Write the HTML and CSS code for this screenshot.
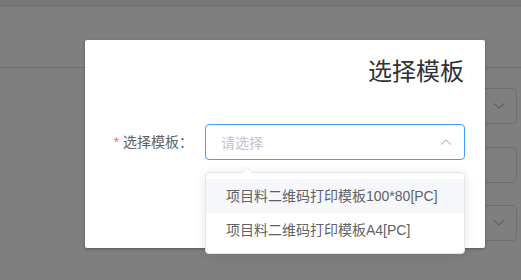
FILE: index.html
```html
<!DOCTYPE html>
<html lang="zh-CN">
<head>
    <meta charset="UTF-8">
    <title>选择模板</title>
    <link rel="stylesheet" href="styles.css">
</head>
<body>
    <div class="page">
        <div class="topbar"></div>
        <div class="toolbar"></div>
        <div class="fields">
            <div class="field field-select">
                <svg class="chev" width="12" height="8" viewBox="0 0 12 8"><path d="M1 1.5 L6 6 L11 1.5" fill="none" stroke="#c0c4cc" stroke-width="1.2"/></svg>
            </div>
            <div class="field field-2"></div>
            <div class="field field-select field-3">
                <svg class="chev" width="12" height="8" viewBox="0 0 12 8"><path d="M1 1.5 L6 6 L11 1.5" fill="none" stroke="#c0c4cc" stroke-width="1.2"/></svg>
            </div>
        </div>
    </div>

    <div class="mask">
        <div class="dialog">
            <div class="dialog-title">选择模板</div>
            <div class="form-row">
                <label class="form-label"><span class="req">*</span> 选择模板：</label>
                <div class="select">
                    <span class="placeholder">请选择</span>
                    <svg class="select-arrow" width="12" height="8" viewBox="0 0 12 8"><path d="M1 6.5 L6 2 L11 6.5" fill="none" stroke="#c0c4cc" stroke-width="1.2"/></svg>
                    <div class="dropdown">
                        <div class="dropdown-arrow"></div>
                        <ul class="options">
                            <li class="option hover">项目料二维码打印模板100*80[PC]</li>
                            <li class="option">项目料二维码打印模板A4[PC]</li>
                        </ul>
                    </div>
                </div>
            </div>
        </div>
    </div>
</body>
</html>
```

FILE: styles.css
```css
html, body {
    margin: 0;
    padding: 0;
}
body {
    font-family: "Liberation Sans", "Noto Sans CJK SC", sans-serif;
    width: 521px;
    height: 280px;
    overflow: hidden;
    background: #fff;
    position: relative;
}
.page {
    height: 280px;
}
.topbar {
    height: 7px;
    background: #eeeeee;
}
.toolbar {
    height: 60px;
    border-bottom: 1px solid #dcdfe6;
}
.fields {
    display: flex;
    flex-direction: column;
    align-items: flex-end;
    padding-right: 4px;
    margin-top: 20px;
}
.field {
    width: 200px;
    height: 34px;
    border: 1px solid #dcdfe6;
    border-radius: 4px;
    display: flex;
    align-items: center;
    justify-content: flex-end;
    padding-right: 11px;
    box-sizing: content-box;
}
.field-2 {
    margin-top: 23px;
}
.field-3 {
    margin-top: 22px;
}
.mask {
    position: absolute;
    left: 0;
    top: 0;
    width: 100%;
    height: 100%;
    background: rgba(0, 0, 0, 0.5);
}
.dialog {
    margin: 40px 0 0 85px;
    width: 400px;
    height: 208px;
    background: #fff;
    border-radius: 2px;
    box-shadow: 0 1px 3px rgba(0, 0, 0, 0.3);
    box-sizing: border-box;
    padding-top: 14px;
}
.dialog-title {
    text-align: right;
    font-size: 24px;
    line-height: 36px;
    color: #303133;
    padding-right: 21px;
}
.form-row {
    display: flex;
    margin-top: 34px;
}
.form-label {
    width: 120px;
    box-sizing: border-box;
    padding-right: 12px;
    text-align: right;
    font-size: 14px;
    line-height: 36px;
    color: #606266;
}
.req {
    color: #f56c6c;
}
.select {
    position: relative;
    width: 260px;
    height: 36px;
    box-sizing: border-box;
    border: 1px solid #409eff;
    border-radius: 4px;
    display: flex;
    align-items: center;
    justify-content: space-between;
    padding: 0 12px 0 15px;
}
.placeholder {
    font-size: 14px;
    color: #c0c4cc;
}
.dropdown {
    position: absolute;
    left: -1px;
    top: 47px;
    width: 260px;
    box-sizing: border-box;
    background: #fff;
    border: 1px solid #e4e7ed;
    border-radius: 4px;
    box-shadow: 0 2px 12px rgba(0, 0, 0, 0.1);
}
.dropdown-arrow {
    position: absolute;
    left: 35px;
    top: -6px;
    width: 0;
    height: 0;
    border-left: 6px solid transparent;
    border-right: 6px solid transparent;
    border-bottom: 6px solid #e4e7ed;
}
.dropdown-arrow:after {
    content: "";
    position: absolute;
    left: -6px;
    top: 1px;
    border-left: 6px solid transparent;
    border-right: 6px solid transparent;
    border-bottom: 6px solid #fff;
}
.options {
    list-style: none;
    margin: 0;
    padding: 6px 0;
}
.option {
    height: 34px;
    line-height: 34px;
    padding: 0 20px;
    font-size: 14px;
    color: #606266;
    white-space: nowrap;
}
.option.hover {
    background: #f5f7fa;
}
```
